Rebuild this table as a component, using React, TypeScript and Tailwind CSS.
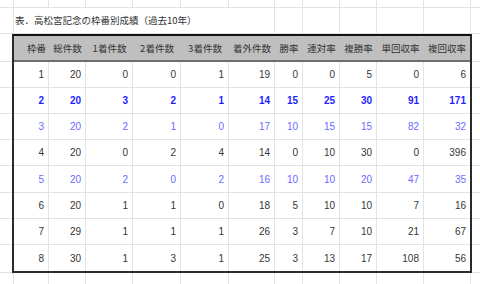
import React from "react";

const sheetCols =
  "grid grid-cols-[14px_35px_37px_47px_48px_48px_46px_28px_37px_37px_47px_47px_1fr]";

const colW = [
  "w-[35px]",
  "w-[37px]",
  "w-[47px]",
  "w-[48px]",
  "w-[48px]",
  "w-[46px]",
  "w-[28px]",
  "w-[37px]",
  "w-[37px]",
  "w-[47px]",
  "w-[46px]",
];

const headers = [
  "枠番",
  "総件数",
  "1着件数",
  "2着件数",
  "3着件数",
  "着外件数",
  "勝率",
  "連対率",
  "複勝率",
  "単回収率",
  "複回収率",
];

type Tone = "normal" | "bold" | "light";

const rows: { tone: Tone; h: string; vals: number[] }[] = [
  { tone: "normal", h: "h-[26px]", vals: [1, 20, 0, 0, 1, 19, 0, 0, 5, 0, 6] },
  { tone: "bold", h: "h-[26px]", vals: [2, 20, 3, 2, 1, 14, 15, 25, 30, 91, 171] },
  { tone: "light", h: "h-[26px]", vals: [3, 20, 2, 1, 0, 17, 10, 15, 15, 82, 32] },
  { tone: "normal", h: "h-[26px]", vals: [4, 20, 0, 2, 4, 14, 0, 10, 30, 0, 396] },
  { tone: "light", h: "h-[27px]", vals: [5, 20, 2, 0, 2, 16, 10, 10, 20, 47, 35] },
  { tone: "normal", h: "h-[26px]", vals: [6, 20, 1, 1, 0, 18, 5, 10, 10, 7, 16] },
  { tone: "normal", h: "h-[26px]", vals: [7, 29, 1, 1, 1, 26, 3, 7, 10, 21, 67] },
  { tone: "normal", h: "h-[26px]", vals: [8, 30, 1, 3, 1, 25, 3, 13, 17, 108, 56] },
];

const toneClass: Record<Tone, string> = {
  normal: "text-[#363636]",
  bold: "text-[#1f1fff] font-bold",
  light: "text-[#6b6bff]",
};

const jp = "font-['Noto_Sans_CJK_JP',sans-serif]";
const num = "font-['Liberation_Sans',Arial,sans-serif]";

// gutter cell heights beside the table (header + 8 rows)
const gutter = ["h-[28px]", "h-[26px]", "h-[26px]", "h-[26px]", "h-[26px]", "h-[27px]", "h-[26px]", "h-[26px]", "h-[28px]"];

function BlankRow({ h }: { h: string }) {
  return (
    <div className={`${sheetCols} ${h}`}>
      {Array.from({ length: 13 }).map((_, i) => (
        <div key={i} className={`border-b border-[#e3e3e3] ${i < 12 ? "border-r" : ""}`} />
      ))}
    </div>
  );
}

function Gutter({ w }: { w: string }) {
  return (
    <div className={`flex flex-col ${w}`}>
      {gutter.map((h, i) => (
        <div key={i} className={`${h} border-b border-[#e3e3e3]`} />
      ))}
    </div>
  );
}

export default function App() {
  return (
    <div className="w-[480px] h-[284px] overflow-hidden bg-white">
      <BlankRow h="h-[8px]" />

      {/* title row */}
      <div className={`${sheetCols} h-[26px]`}>
        <div className="border-r border-b border-[#e3e3e3]" />
        <div className={`col-span-6 border-r border-b border-[#e3e3e3] flex items-center pl-px text-[9.5px] text-[#333] ${jp}`}>
          表．高松宮記念の枠番別成績（過去10年）
        </div>
        {Array.from({ length: 6 }).map((_, i) => (
          <div key={i} className={`border-b border-[#e3e3e3] ${i < 5 ? "border-r" : ""}`} />
        ))}
      </div>

      <div className="flex">
        <Gutter w="w-[12px]" />

        <div className="border-2 border-[#2a2a2a] border-t-[#111]">
          <div className="flex h-[24px] bg-[#bfbfbf] border-b-2 border-[#6f6f6f] box-content">
            {headers.map((t, i) => (
              <div
                key={t}
                className={`${colW[i]} flex items-center justify-center text-[9.5px] text-[#333] ${jp} ${i === 0 ? "pl-[10px]" : ""}`}
              >
                {t}
              </div>
            ))}
          </div>

          {rows.map((r, ri) => (
            <div key={ri} className={`flex ${r.h}`}>
              {r.vals.map((v, i) => (
                <div
                  key={i}
                  className={`${colW[i]} flex items-center justify-end pr-[4px] text-[10px] ${num} ${toneClass[r.tone]} border-[#e3e3e3] ${i < 10 ? "border-r" : ""} ${ri < 7 ? "border-b" : ""}`}
                >
                  {v}
                </div>
              ))}
            </div>
          ))}
        </div>

        <Gutter w="flex-1" />
      </div>

      <BlankRow h="h-[26px]" />
    </div>
  );
}
